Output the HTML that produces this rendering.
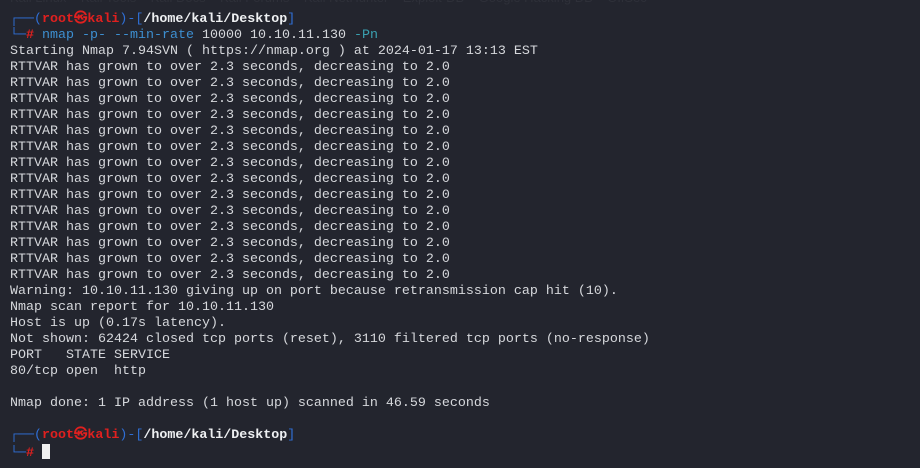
<!DOCTYPE html>
<html><head><meta charset="utf-8"><style>
html,body{margin:0;padding:0;}
body{width:920px;height:468px;background:#23252e;overflow:hidden;position:relative;}
pre{position:absolute;left:10px;top:12px;margin:0;font-family:"Liberation Mono","DejaVu Sans Mono",monospace;font-size:13.33px;line-height:16px;color:#d6d8dc;}
.b{color:#2f6fd6}.r{color:#e0201f;font-weight:bold}.w{color:#eef0f2;font-weight:bold}
.c{color:#3d8fd1}.t{color:#3aa0b0}
.bar{position:absolute;top:-10px;left:10px;font-family:"Liberation Sans",sans-serif;font-size:13px;color:#2e3039;white-space:nowrap}
.cur{display:inline-block;width:8px;height:15px;background:#f0f0f0;vertical-align:-3px}
</style></head><body>
<div class="bar">  Kali Linux &nbsp;&nbsp; Kali Tools &nbsp;&nbsp; Kali Docs &nbsp;&nbsp; Kali Forums &nbsp;&nbsp; Kali NetHunter &nbsp;&nbsp; Exploit-DB &nbsp;&nbsp; Google Hacking DB &nbsp;&nbsp; OffSec</div>
<pre><span class="b">┌──(</span><span class="r">root㉿kali</span><span class="b">)-[</span><span class="w">/home/kali/Desktop</span><span class="b">]</span>
<span class="b">└─</span><span class="r">#</span> <span class="c">nmap</span> <span class="c">-p-</span> <span class="c">--min-rate</span> 10000 10.10.11.130 <span class="t">-Pn</span>
Starting Nmap 7.94SVN ( https://nmap.org ) at 2024-01-17 13:13 EST
RTTVAR has grown to over 2.3 seconds, decreasing to 2.0
RTTVAR has grown to over 2.3 seconds, decreasing to 2.0
RTTVAR has grown to over 2.3 seconds, decreasing to 2.0
RTTVAR has grown to over 2.3 seconds, decreasing to 2.0
RTTVAR has grown to over 2.3 seconds, decreasing to 2.0
RTTVAR has grown to over 2.3 seconds, decreasing to 2.0
RTTVAR has grown to over 2.3 seconds, decreasing to 2.0
RTTVAR has grown to over 2.3 seconds, decreasing to 2.0
RTTVAR has grown to over 2.3 seconds, decreasing to 2.0
RTTVAR has grown to over 2.3 seconds, decreasing to 2.0
RTTVAR has grown to over 2.3 seconds, decreasing to 2.0
RTTVAR has grown to over 2.3 seconds, decreasing to 2.0
RTTVAR has grown to over 2.3 seconds, decreasing to 2.0
RTTVAR has grown to over 2.3 seconds, decreasing to 2.0
Warning: 10.10.11.130 giving up on port because retransmission cap hit (10).
Nmap scan report for 10.10.11.130
Host is up (0.17s latency).
Not shown: 62424 closed tcp ports (reset), 3110 filtered tcp ports (no-response)
PORT   STATE SERVICE
80/tcp open  http

Nmap done: 1 IP address (1 host up) scanned in 46.59 seconds

<span class="b">┌──(</span><span class="r">root㉿kali</span><span class="b">)-[</span><span class="w">/home/kali/Desktop</span><span class="b">]</span>
<span class="b">└─</span><span class="r">#</span> <span class="cur"></span></pre>
</body></html>
